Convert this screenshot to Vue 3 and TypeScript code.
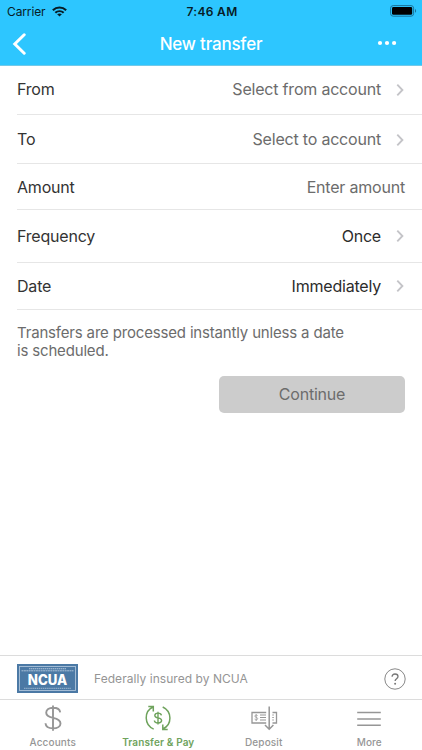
<script setup lang="ts">
interface Row {
  key: string
  label: string
  value: string
  filled: boolean
  chevron: boolean
}

interface Tab {
  key: string
  label: string
  active: boolean
}

const rows: Row[] = [
  { key: 'from', label: 'From', value: 'Select from account', filled: false, chevron: true },
  { key: 'to', label: 'To', value: 'Select to account', filled: false, chevron: true },
  { key: 'amount', label: 'Amount', value: 'Enter amount', filled: false, chevron: false },
  { key: 'frequency', label: 'Frequency', value: 'Once', filled: true, chevron: true },
  { key: 'date', label: 'Date', value: 'Immediately', filled: true, chevron: true },
]

const tabs: Tab[] = [
  { key: 'accounts', label: 'Accounts', active: false },
  { key: 'transfer', label: 'Transfer & Pay', active: true },
  { key: 'deposit', label: 'Deposit', active: false },
  { key: 'more', label: 'More', active: false },
]
</script>

<template>
  <div class="screen">
    <header class="top">
      <div class="status">
        <div class="carrier">
          <span>Carrier</span>
          <svg class="wifi" width="15" height="11" viewBox="0 0 14 11" preserveAspectRatio="none">
            <g fill="none" stroke="#071c26" stroke-width="2">
              <path d="M0.8 4.2C4.4 0.7 9.6 0.7 13.2 4.2" />
              <path d="M3.1 6.7C5.4 4.6 8.6 4.6 10.9 6.7" />
            </g>
            <path d="M4.8 8.2C6.1 7.1 7.9 7.1 9.2 8.2L7 10.5Z" fill="#071c26" />
          </svg>
        </div>
        <span class="clock">7:46 AM</span>
        <svg class="battery" width="27" height="12" viewBox="0 0 27 12">
          <rect x="0.6" y="0.6" width="23" height="10.6" rx="2.6" fill="none" stroke="#19739a" />
          <rect x="2" y="2" width="20.2" height="7.8" rx="1.4" fill="#000" />
          <path d="M25 4v3.8c1.5-.6 1.5-3.2 0-3.8Z" fill="#19739a" />
        </svg>
      </div>
      <div class="nav">
        <svg class="back" width="14" height="22" viewBox="0 0 14 22">
          <path d="M12.2 1.8L2.800 11l9.400 9.200" fill="none" stroke="#fff" stroke-width="3" stroke-linecap="round" />
        </svg>
        <h1 class="title">New transfer</h1>
        <svg class="dots" width="20" height="6" viewBox="0 0 20 6" fill="#fff">
          <circle cx="3" cy="3" r="2.1" />
          <circle cx="10" cy="3" r="2.1" />
          <circle cx="17.1" cy="3" r="2.1" />
        </svg>
      </div>
    </header>

    <main class="form">
      <div v-for="row in rows" :key="row.key" class="row" :class="'row-' + row.key">
        <span class="label">{{ row.label }}</span>
        <span class="value" :class="{ filled: row.filled }">{{ row.value }}</span>
        <svg v-if="row.chevron" class="chevron" width="9" height="14" viewBox="0 0 9 14">
          <path d="M1.300 1.700L6.400 7l-5.100 5.300" fill="none" stroke="#c4c4c8" stroke-width="1.900" />
        </svg>
      </div>
      <p class="note">Transfers are processed instantly unless a date<br />is scheduled.</p>
      <button class="continue" type="button">Continue</button>
    </main>

    <section class="insured">
      <svg class="ncua" width="61" height="29" viewBox="0 0 61 29">
        <rect width="61" height="29" fill="#4b79a5" />
        <rect x="2.500" y="2.500" width="56" height="24" fill="none" stroke="#adc4da" stroke-width="0.900" />
        <g fill="none" stroke="#b4c8dc">
          <path d="M12 4.700h37" stroke-width="1.100" stroke-dasharray="1.500 0.500" />
          <path d="M4.500 6.800h52" stroke-width="0.900" stroke-dasharray="2 0.400" />
          <path d="M7 24.300h47" stroke="#8cabc8" stroke-width="1.300" stroke-dasharray="1.500 0.600" />
        </g>
        <text x="30.500" y="20.600" text-anchor="middle" textLength="39.500" lengthAdjust="spacingAndGlyphs" class="ncua-text">NCUA</text>
      </svg>
      <span class="insured-text">Federally insured by NCUA</span>
      <svg class="help" width="22" height="22" viewBox="0 0 22 22">
        <circle cx="11" cy="11" r="10.200" fill="none" stroke="#888" stroke-width="1" />
        <path d="M8.100 8.700C8.100 6.900 9.300 6 11 6c1.800 0 3 1 3 2.500 0 2.200-2.900 2.200-2.900 4.500" fill="none" stroke="#777" stroke-width="1.300" />
        <circle cx="11.100" cy="15.800" r="1" fill="#777" />
      </svg>
    </section>

    <nav class="tabs">
      <div v-for="tab in tabs" :key="tab.key" class="tab" :class="['tab-' + tab.key, { active: tab.active }]">
        <svg v-if="tab.key === 'accounts'" width="28" height="28" viewBox="0 0 28 28" fill="none" stroke="currentColor" stroke-width="1.900">
          <path d="M14 1.500v25.200M21.200 8.300C20.800 5.300 18 3.700 14.100 3.700c-4 0-6.900 2-6.900 5 0 3.300 3 4.300 6.900 5.200 4.300 1 7.400 2.200 7.400 5.500 0 3-3.100 5-7.400 5-4.400 0-7.400-1.900-7.600-5.100" />
        </svg>
        <svg v-else-if="tab.key === 'transfer'" width="28" height="28" viewBox="0 0 28 28" fill="none" stroke="currentColor" stroke-width="1.500">
          <path d="M9.700 25.100C-0.100 20.900-0.200 7.200 9 3M4.300 2.600h5v5" />
          <path d="M18.700 3C28.300 7.500 28.300 20.700 18.900 25M23.700 25.500h-4.900v-4.900" />
          <path d="M14 7.700v12.700M17.400 11.300C17.200 9.800 16 9.100 14.100 9.100c-2 0-3.300.9-3.300 2.300 0 1.600 1.300 2.100 3.300 2.500 2.100.5 3.500 1.100 3.500 2.700 0 1.500-1.400 2.400-3.500 2.400-2.200 0-3.600-.9-3.700-2.500" stroke-width="1.400" />
        </svg>
        <svg v-else-if="tab.key === 'deposit'" width="28" height="28" viewBox="0 0 28 28" fill="none" stroke="currentColor" stroke-width="1.300">
          <path d="M16.200 8.500H2v10.500h14.200M22.500 8.500h4v10.500h-4" />
          <path d="M19.200 2.500v22.500M15 21l4.200 4.200 4.200-4.200" stroke-width="1.500" />
          <path d="M10 11h6M10 13.500h6M10 16h6M22.300 11h1.500M22.300 13.500h1.500M22.300 16h1.500" stroke-width="1.100" />
          <path d="M6.200 10.200v6.800M7.600 11.600c-.7-.9-2.800-.8-2.800.5 0 1.500 2.900.9 2.900 2.500 0 1.500-2.400 1.600-3.100.5" stroke-width="0.800" />
        </svg>
        <svg v-else width="28" height="28" viewBox="0 0 28 28" fill="none" stroke="currentColor" stroke-width="1.400">
          <path d="M2.200 8.500h23.600M2.200 15h23.600M2.200 21.300h23.600" />
        </svg>
        <span class="tab-label">{{ tab.label }}</span>
      </div>
    </nav>
  </div>
</template>

<style>
body {
  margin: 0;
  background: #fff;
}
</style>

<style scoped>
.screen {
  display: flex;
  flex-direction: column;
  width: 422px;
  height: 750px;
  overflow: hidden;
  background: #fff;
  color: #333;
  font-family: Inter, Roboto, sans-serif;
}

.top {
  box-sizing: border-box;
  height: 66px;
  background: #2dc6ff;
  border-bottom: 1px solid #72c9e8;
}

.status {
  display: grid;
  grid-template-columns: 1fr auto 1fr;
  align-items: center;
  height: 22px;
  padding: 0 5px 0 7px;
  color: #071c26;
  font-size: 12px;
}

.carrier {
  display: flex;
  align-items: center;
  gap: 6px;
  letter-spacing: -0.12px;
}

.clock {
  font-weight: 600;
  letter-spacing: 0.32px;
}

.battery {
  justify-self: end;
}

.nav {
  display: grid;
  grid-template-columns: 1fr auto 1fr;
  align-items: center;
  height: 43px;
  padding: 0 12px;
}

.title {
  margin: 0;
  color: #fff;
  font-size: 17px;
  font-weight: 500;
  letter-spacing: -0.2px;
  line-height: 22px;
}

.dots {
  justify-self: end;
  margin: -2px 13px 0 0;
}

.form {
  display: flex;
  flex: 1;
  flex-direction: column;
}

.row {
  box-sizing: border-box;
  display: flex;
  align-items: center;
  height: 49px;
  margin-left: 17px;
  padding-right: 17px;
  border-bottom: 1px solid #e6e6e6;
  font-size: 16px;
  letter-spacing: -0.2px;
  line-height: 20px;
}

.row-from {
  padding-bottom: 2px;
}

.row-to {
  padding-bottom: 1px;
}

.row-amount {
  height: 46px;
}

.row-frequency {
  height: 53px;
}

.row-date {
  height: 47px;
}

.value {
  margin-left: auto;
  color: #6c6c6c;
}

.value.filled {
  color: #2c2c2c;
}

.chevron {
  margin-left: 15px;
}

.row-from .chevron,
.row-to .chevron {
  margin-top: 2px;
}

.note {
  margin: 14px 0 0 17px;
  color: #6c6c6c;
  font-size: 15px;
  letter-spacing: -0.17px;
  line-height: 18px;
}

.continue {
  align-self: flex-end;
  width: 186px;
  height: 37px;
  margin: 16px 17px 0 0;
  padding: 0;
  border: 0;
  border-radius: 5px;
  background: #ccc;
  color: #6c6c6c;
  font: 400 16px/37px Inter, Roboto, sans-serif;
  letter-spacing: -0.2px;
}

.insured {
  box-sizing: border-box;
  display: flex;
  align-items: center;
  height: 44px;
  padding: 1px 16px 0 17px;
  border-top: 1px solid #dcdcdc;
}

.ncua-text {
  fill: #fff;
  font: 800 14px Inter, Roboto, sans-serif;
}

.insured-text {
  margin-left: 16px;
  color: #959595;
  font-size: 12px;
  letter-spacing: 0.05px;
}

.help {
  margin: 2px 0 0 auto;
}

.tabs {
  box-sizing: border-box;
  display: grid;
  grid-template-columns: repeat(4, 1fr);
  height: 51px;
  padding-top: 4px;
  border-top: 1px solid #dcdcdc;
}

.tab {
  display: flex;
  flex-direction: column;
  align-items: center;
  gap: 3px;
  color: #969696;
}

.tab.active {
  color: #6fa35d;
}

.tab-label {
  font-size: 10px;
  font-weight: 500;
  letter-spacing: 0.12px;
  line-height: 14px;
}

.active .tab-label {
  font-weight: 600;
  letter-spacing: 0.14px;
}
</style>
